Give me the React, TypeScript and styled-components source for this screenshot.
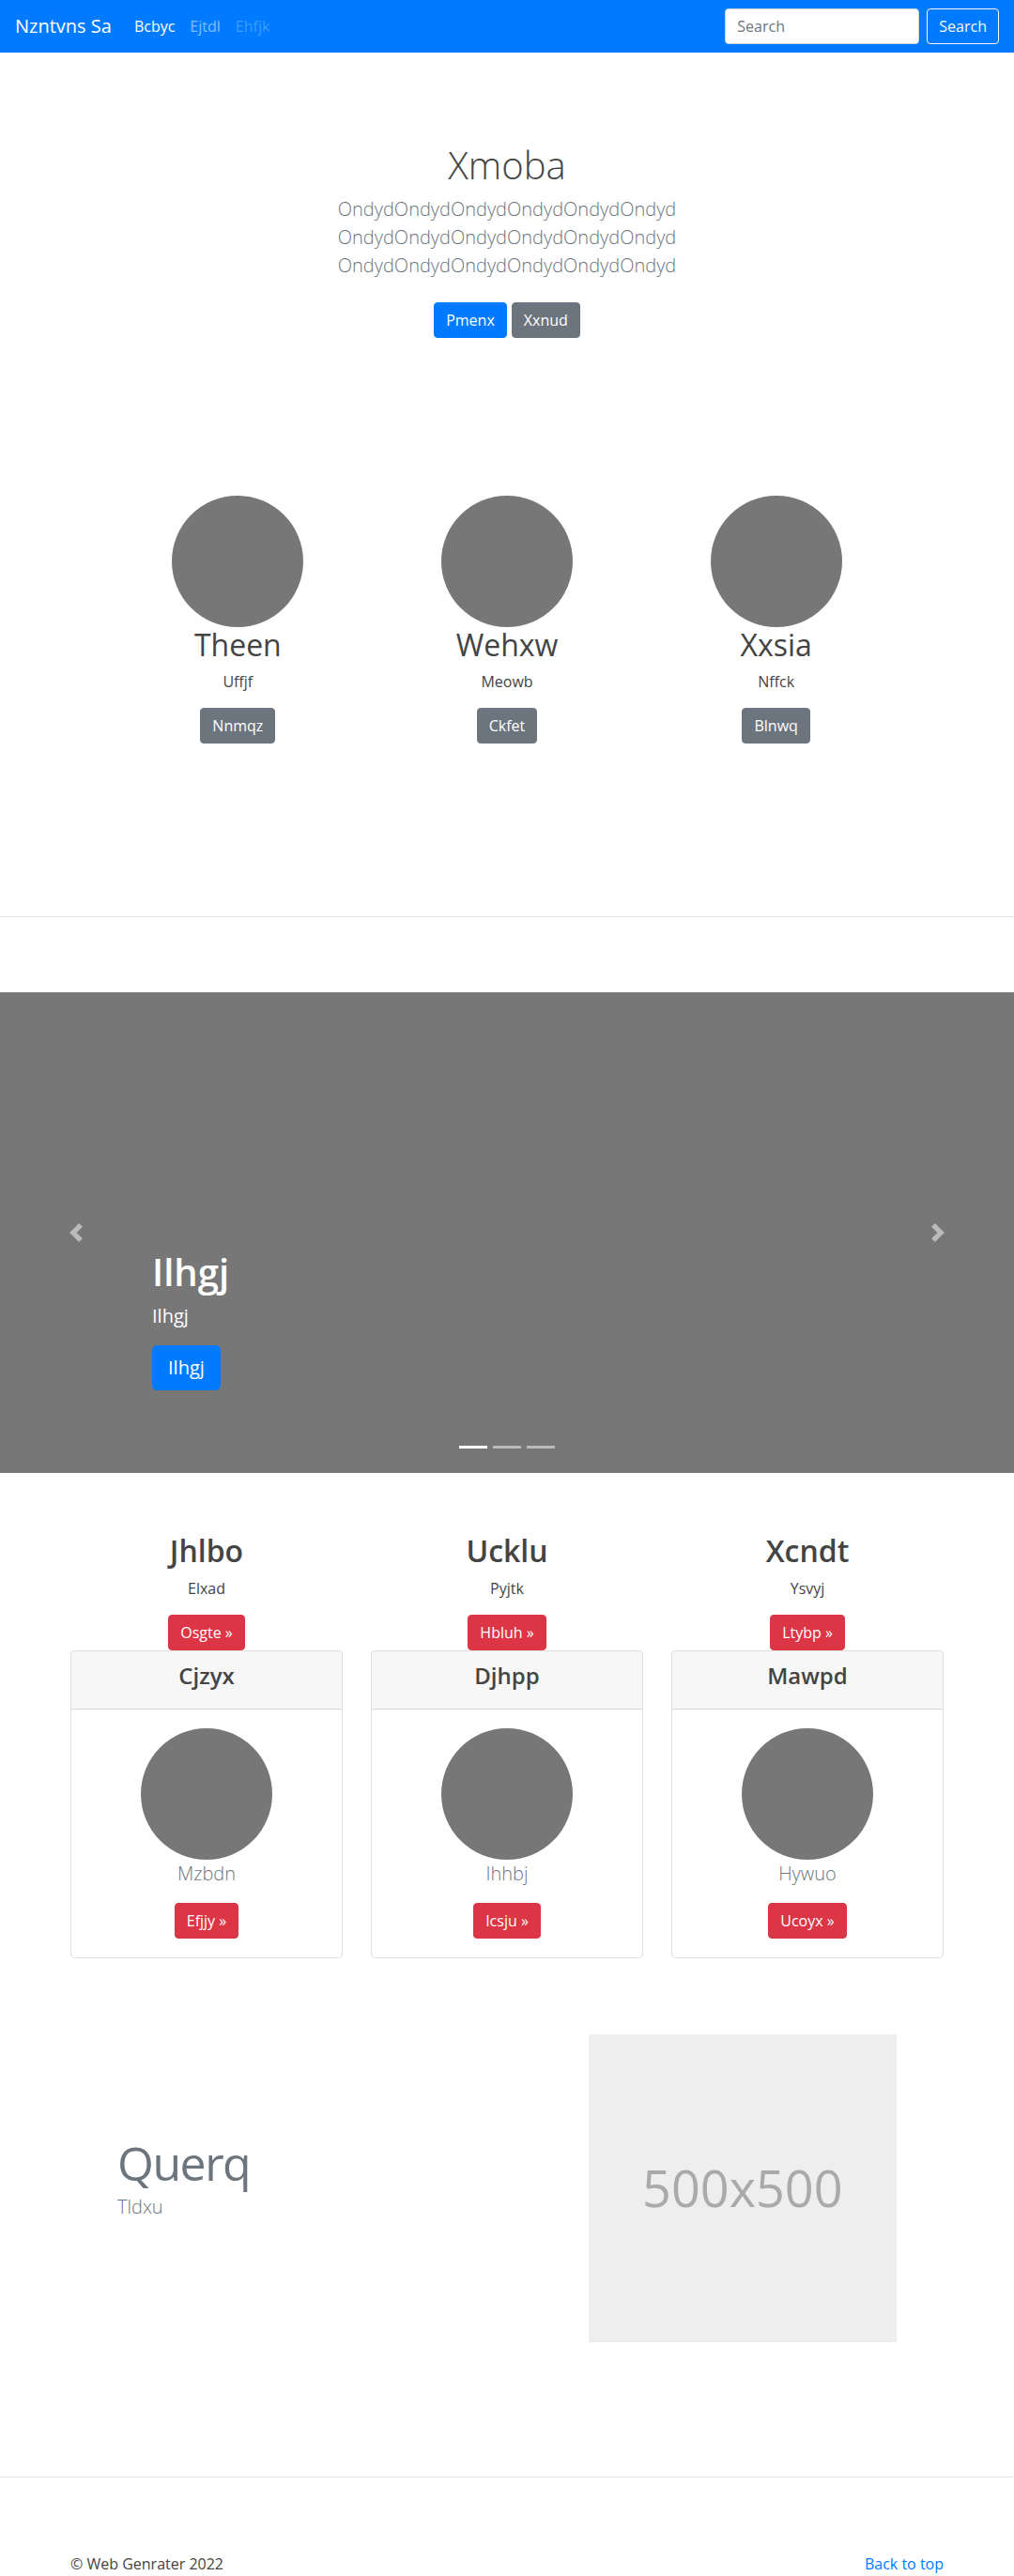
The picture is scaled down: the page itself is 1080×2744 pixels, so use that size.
import styled, { createGlobalStyle, css } from "styled-components";

const GlobalStyle = createGlobalStyle`
  * { box-sizing: border-box; }
  body {
    margin: 0;
    font-family: "Open Sans", "Noto Sans", sans-serif;
    font-size: 16px;
    line-height: 1.5;
    color: #444;
    background: #fff;
  }
`;

type Variant = "primary" | "secondary" | "danger";

const variants: Record<Variant, string> = {
  primary: "#007bff",
  secondary: "#6c757d",
  danger: "#dc3545",
};

const features = [
  { name: "Theen", text: "Uffjf", action: "Nnmqz" },
  { name: "Wehxw", text: "Meowb", action: "Ckfet" },
  { name: "Xxsia", text: "Nffck", action: "Blnwq" },
];

const columns = [
  { title: "Jhlbo", text: "Elxad", action: "Osgte", card: "Cjzyx", caption: "Mzbdn", more: "Efjjy" },
  { title: "Ucklu", text: "Pyjtk", action: "Hbluh", card: "Djhpp", caption: "Ihhbj", more: "Icsju" },
  { title: "Xcndt", text: "Ysvyj", action: "Ltybp", card: "Mawpd", caption: "Hywuo", more: "Ucoyx" },
];

const App = () => {
  return (
    <>
      <GlobalStyle />
      <Navbar>
        <Brand>Nzntvns Sa</Brand>
        <NavList>
          <NavLink $state="active">Bcbyc</NavLink>
          <NavLink>Ejtdl</NavLink>
          <NavLink $state="disabled">Ehfjk</NavLink>
        </NavList>
        <SearchForm>
          <SearchInput placeholder="Search" />
          <OutlineButton>Search</OutlineButton>
        </SearchForm>
      </Navbar>

      <Hero>
        <HeroTitle>Xmoba</HeroTitle>
        <Lead>
          OndydOndydOndydOndydOndydOndyd
          <br />
          OndydOndydOndydOndydOndydOndyd
          <br />
          OndydOndydOndydOndydOndydOndyd
        </Lead>
        <ButtonRow>
          <Btn $variant="primary">Pmenx</Btn>
          <Btn $variant="secondary">Xxnud</Btn>
        </ButtonRow>
      </Hero>

      <Marketing>
        {features.map((f) => (
          <Feature key={f.name}>
            <Circle />
            <FeatureName>{f.name}</FeatureName>
            <FeatureText>{f.text}</FeatureText>
            <Btn $variant="secondary">{f.action}</Btn>
          </Feature>
        ))}
      </Marketing>

      <Divider />

      <Carousel>
        <ControlPrev>
          <svg width="20" height="20" viewBox="0 0 8 8" fill="#fff">
            <path d="M5.25 0l-4 4 4 4 1.5-1.5L4.25 4l2.5-2.5L5.25 0z" />
          </svg>
        </ControlPrev>
        <Caption>
          <CaptionTitle>Ilhgj</CaptionTitle>
          <CaptionText>Ilhgj</CaptionText>
          <Btn $variant="primary" $large>
            Ilhgj
          </Btn>
        </Caption>
        <ControlNext>
          <svg width="20" height="20" viewBox="0 0 8 8" fill="#fff">
            <path d="M2.75 0l-1.5 1.5L3.75 4l-2.5 2.5L2.75 8l4-4-4-4z" />
          </svg>
        </ControlNext>
        <Indicators>
          <Indicator $active />
          <Indicator />
          <Indicator />
        </Indicators>
      </Carousel>

      <Columns>
        {columns.map((c) => (
          <Column key={c.title}>
            <ColumnTitle>{c.title}</ColumnTitle>
            <FeatureText>{c.text}</FeatureText>
            <Btn $variant="danger">{c.action} &raquo;</Btn>
            <Card>
              <CardHeader>
                <CardTitle>{c.card}</CardTitle>
              </CardHeader>
              <CardBody>
                <Circle />
                <CardCaption>{c.caption}</CardCaption>
                <Btn $variant="danger">{c.more} &raquo;</Btn>
              </CardBody>
            </Card>
          </Column>
        ))}
      </Columns>

      <Featurette>
        <FeaturetteText>
          <FeaturetteHeading>Querq</FeaturetteHeading>
          <FeaturetteLead>Tldxu</FeaturetteLead>
        </FeaturetteText>
        <FeaturetteMedia>
          <Placeholder>500x500</Placeholder>
        </FeaturetteMedia>
      </Featurette>

      <Divider />

      <Footer>
        <span>&copy; Web Genrater 2022</span>
        <FooterLink href="#">Back to top</FooterLink>
      </Footer>
    </>
  );
};

export default App;

const Navbar = styled.nav`
  display: flex;
  align-items: center;
  height: 56px;
  padding: 0 16px;
  background: #007bff;
`;

const Brand = styled.a`
  margin-right: 16px;
  font-size: 20px;
  line-height: 30px;
  color: #fff;
`;

const NavList = styled.div`
  display: flex;
  flex: 1;
`;

const NavLink = styled.a<{ $state?: "active" | "disabled" }>`
  padding: 8px;
  font-size: 16px;
  color: ${(p) =>
    p.$state === "active"
      ? "#fff"
      : p.$state === "disabled"
      ? "rgba(255, 255, 255, 0.25)"
      : "rgba(255, 255, 255, 0.5)"};
`;

const SearchForm = styled.form`
  display: flex;
  align-items: center;
  gap: 8px;
`;

const SearchInput = styled.input`
  width: 207px;
  height: 38px;
  padding: 6px 12px;
  border: 1px solid #ced4da;
  border-radius: 4px;
  font: inherit;
  font-size: 16px;
  color: #495057;
  &::placeholder {
    color: #6c757d;
  }
`;

const OutlineButton = styled.button`
  height: 38px;
  padding: 6px 12px;
  border: 1px solid #f8f9fa;
  border-radius: 4px;
  background: transparent;
  font: inherit;
  font-size: 16px;
  color: #f8f9fa;
`;

const Btn = styled.a<{ $variant: Variant; $large?: boolean }>`
  display: inline-block;
  border: 1px solid ${(p) => variants[p.$variant]};
  border-radius: 4px;
  color: #fff;
  background: ${(p) => variants[p.$variant]};
  ${(p) =>
    p.$large
      ? css`
          padding: 8px 16px;
          font-size: 20px;
          line-height: 30px;
          border-radius: 5px;
        `
      : css`
          padding: 6px 12px;
          font-size: 16px;
          line-height: 24px;
        `}
`;

const Hero = styled.section`
  padding-top: 96px;
  text-align: center;
`;

const HeroTitle = styled.h1`
  margin: 0 0 8px;
  font-size: 40px;
  font-weight: 300;
  line-height: 1.2;
`;

const Lead = styled.p`
  margin: 0;
  font-size: 20px;
  font-weight: 300;
  line-height: 30px;
  color: #6c757d;
`;

const ButtonRow = styled.div`
  display: flex;
  justify-content: center;
  gap: 5px;
  margin-top: 24px;
`;

const Marketing = styled.section`
  display: grid;
  grid-template-columns: repeat(3, 1fr);
  width: 860px;
  margin: 0 auto;
  padding: 168px 0 104px;
`;

const Feature = styled.div`
  display: flex;
  flex-direction: column;
  align-items: center;
  text-align: center;
`;

const Circle = styled.div`
  width: 140px;
  height: 140px;
  border-radius: 50%;
  background: #777;
`;

const FeatureName = styled.h2`
  margin: 0 0 8px;
  font-size: 32px;
  font-weight: 400;
  line-height: 1.2;
`;

const FeatureText = styled.p`
  margin: 0 0 16px;
`;

const Divider = styled.hr`
  margin: 80px 0;
  border: 0;
  border-top: 1px solid rgba(0, 0, 0, 0.1);
`;

const Carousel = styled.section`
  position: relative;
  display: flex;
  align-items: flex-end;
  height: 512px;
  margin-bottom: 64px;
  padding: 0 15% 88px;
  background: #777;
`;

const Control = styled.span`
  position: absolute;
  top: 0;
  bottom: 0;
  display: flex;
  align-items: center;
  justify-content: center;
  width: 15%;
  opacity: 0.5;
`;

const ControlPrev = styled(Control)`
  left: 0;
`;

const ControlNext = styled(Control)`
  right: 0;
`;

const Caption = styled.div`
  color: #fff;
`;

const CaptionTitle = styled.h1`
  margin: 0 0 8px;
  font-size: 40px;
  font-weight: 600;
  line-height: 1.2;
`;

const CaptionText = styled.p`
  margin: 0 0 16px;
  font-size: 20px;
  line-height: 30px;
`;

const Indicators = styled.div`
  position: absolute;
  left: 0;
  right: 0;
  bottom: 26px;
  display: flex;
  justify-content: center;
  gap: 6px;
`;

const Indicator = styled.span<{ $active?: boolean }>`
  width: 30px;
  height: 3px;
  background: ${(p) => (p.$active ? "#fff" : "rgba(255, 255, 255, 0.5)")};
`;

const Columns = styled.section`
  display: grid;
  grid-template-columns: repeat(3, 1fr);
  gap: 30px;
  width: 930px;
  margin: 0 auto;
`;

const Column = styled.div`
  display: flex;
  flex-direction: column;
  align-items: center;
  text-align: center;
`;

const ColumnTitle = styled.h2`
  margin: 0 0 8px;
  font-size: 32px;
  font-weight: 600;
  line-height: 1.2;
`;

const Card = styled.div`
  align-self: stretch;
  border: 1px solid rgba(0, 0, 0, 0.125);
  border-radius: 4px;
`;

const CardHeader = styled.div`
  padding: 12px 20px;
  background: rgba(0, 0, 0, 0.03);
  border-bottom: 1px solid rgba(0, 0, 0, 0.125);
`;

const CardTitle = styled.h4`
  margin: 0 0 8px;
  font-size: 24px;
  font-weight: 600;
  line-height: 1.2;
`;

const CardBody = styled.div`
  display: flex;
  flex-direction: column;
  align-items: center;
  padding: 20px;
`;

const CardCaption = styled.p`
  margin: 0 0 16px;
  font-size: 20px;
  font-weight: 300;
  line-height: 30px;
  color: #6c757d;
`;

const Featurette = styled.section`
  display: grid;
  grid-template-columns: 7fr 5fr;
  align-items: center;
  width: 860px;
  margin: 0 auto;
  padding: 81px 0 63px;
`;

const FeaturetteText = styled.div`
  padding: 0 15px;
`;

const FeaturetteHeading = styled.h2`
  margin: 0 0 7px;
  font-size: 50px;
  font-weight: 400;
  line-height: 1;
  letter-spacing: -1.5px;
  color: #6c757d;
`;

const FeaturetteLead = styled.p`
  margin: 0 0 16px;
  font-size: 20px;
  font-weight: 300;
  line-height: 30px;
  color: #6c757d;
`;

const FeaturetteMedia = styled.div`
  padding: 0 15px;
`;

const Placeholder = styled.div`
  display: flex;
  align-items: center;
  justify-content: center;
  aspect-ratio: 1;
  background: #eee;
  font-size: 54px;
  color: #aaa;
`;

const Footer = styled.footer`
  display: flex;
  justify-content: space-between;
  width: 930px;
  margin: 0 auto;
  line-height: 24px;
`;

const FooterLink = styled.a`
  color: #007bff;
  text-decoration: none;
`;
